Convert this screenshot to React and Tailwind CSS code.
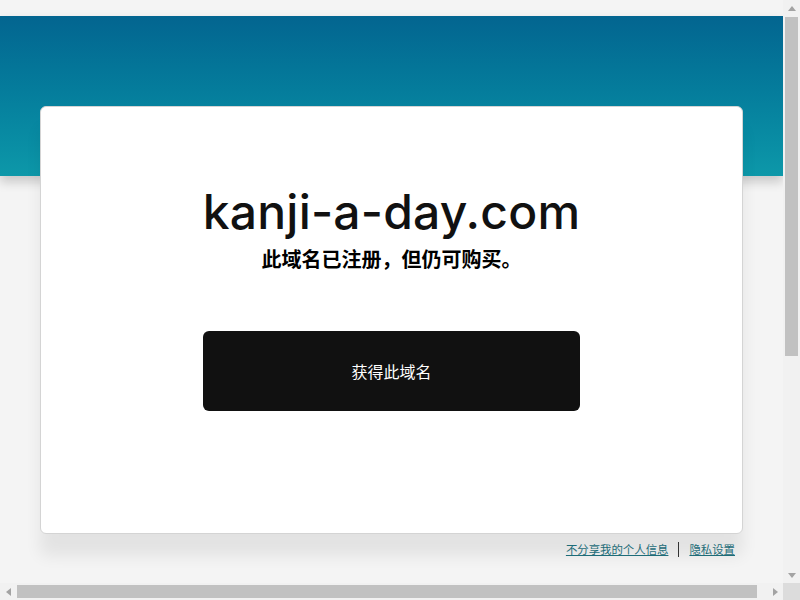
import React from 'react';

const cjk = { fontFamily: '"Noto Sans CJK SC", "Noto Sans", sans-serif' };

const Arrow = ({ dir }) => {
  const pts = {
    up: '4,7 8,2 12,7',
    down: '4,3 8,8 12,3',
    left: '7,4 2,8 7,12',
    right: '3,4 8,8 3,12',
  }[dir];
  const box = dir === 'up' || dir === 'down' ? '0 0 16 10' : '0 0 10 16';
  return (
    <svg viewBox={box} className={dir === 'up' || dir === 'down' ? 'w-[16px] h-[10px]' : 'w-[10px] h-[16px]'}>
      <polygon points={pts} fill="#a3a3a3" />
    </svg>
  );
};

const Page = () => (
  <div className="flex-1 bg-[#f4f4f4] overflow-hidden flex flex-col">
    <div className="h-[16px] shrink-0" />
    <div className="relative">
      <div className="h-[160px] bg-gradient-to-b from-[#036590] to-[#0d98a9] shadow-[0_6px_10px_rgba(0,0,0,0.18)]" />
      <div className="absolute left-0 right-0 top-[90px] px-[40px]">
        <div className="bg-white rounded-[6px] border border-[#d4d4d4] h-[428px] flex flex-col items-center shadow-[0_22px_16px_rgba(0,0,0,0.07)]">
          <div
            className="mt-[75px] text-[48px] leading-[60px] font-medium text-[#111] tracking-[0.2px]"
            style={{ fontFamily: 'Inter, "Noto Sans", sans-serif' }}
          >
            kanji-a-day.com
          </div>
          <div className="mt-[4px] text-[20px] leading-[26px] font-bold text-black" style={cjk}>
            此域名已注册，但仍可购买。
          </div>
          <button
            className="mt-[59px] w-[377px] h-[80px] bg-[#111] rounded-[6px] text-white text-[16px] flex items-center justify-center"
            style={cjk}
          >
            获得此域名
          </button>
        </div>
        <div className="flex justify-end items-center pr-[8px] mt-[7px] text-[11.4px] leading-[16px]" style={cjk}>
          <a href="#" className="text-[#1d6c78] underline">不分享我的个人信息</a>
          <span className="mx-[10px] w-px h-[15px] bg-[#333]" />
          <a href="#" className="text-[#1d6c78] underline">隐私设置</a>
        </div>
      </div>
    </div>
  </div>
);

export default function App() {
  return (
    <div className="w-[800px] h-[600px] flex flex-col overflow-hidden">
      <div className="flex flex-1 min-h-0">
        <Page />
        <div className="w-[17px] bg-[#f1f1f1] flex flex-col items-center">
          <div className="h-[17px] flex items-center justify-center"><Arrow dir="up" /></div>
          <div className="w-[13px] h-[339px] bg-[#c1c1c1]" />
          <div className="flex-1" />
          <div className="h-[17px] flex items-center justify-center"><Arrow dir="down" /></div>
        </div>
      </div>
      <div className="h-[17px] flex bg-[#f1f1f1]">
        <div className="w-[17px] flex items-center justify-center"><Arrow dir="left" /></div>
        <div className="flex-1 flex items-center">
          <div className="w-[740px] h-[13px] bg-[#c1c1c1]" />
        </div>
        <div className="w-[17px] flex items-center justify-center"><Arrow dir="right" /></div>
        <div className="w-[17px] bg-[#dcdcdc]" />
      </div>
    </div>
  );
}
